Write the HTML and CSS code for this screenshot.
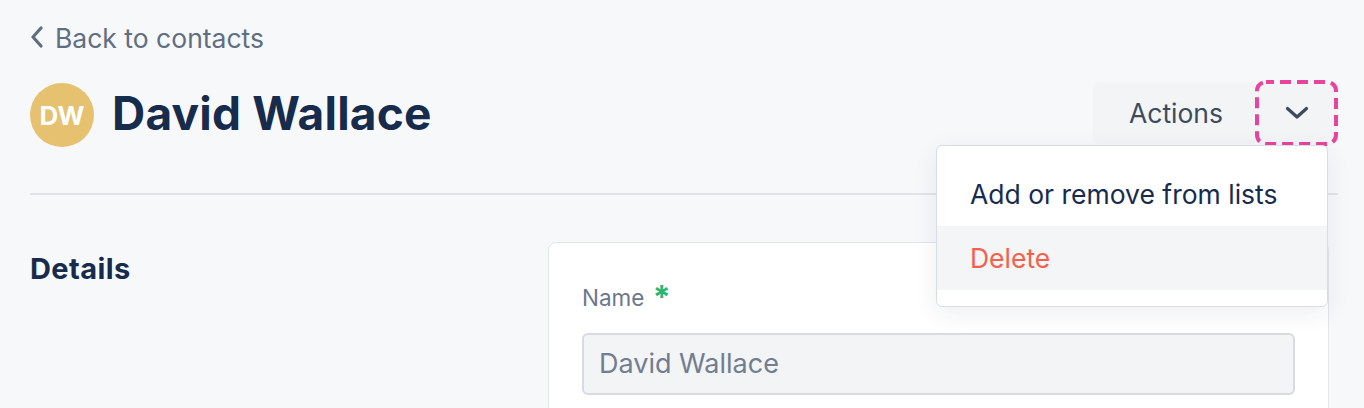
FILE: index.html
```html
<!DOCTYPE html>
<html lang="en">
<head>
<meta charset="utf-8">
<title>David Wallace</title>
<link rel="stylesheet" href="styles.css">
</head>
<body>
<div class="page">
  <a class="back" href="#">
    <svg class="back-icon" width="14" height="22" viewBox="0 0 14 22"><path d="M11 2 L3 11 L11 20" fill="none" stroke="#5f6e81" stroke-width="3.2" stroke-linecap="round" stroke-linejoin="round"/></svg>
    <span>Back to contacts</span>
  </a>
  <div class="header">
    <div class="identity">
      <div class="avatar">DW</div>
      <h1 class="title">David Wallace</h1>
    </div>
    <div class="actions">
      <button class="actions-btn">Actions</button>
      <button class="toggle">
        <svg class="focus-ring" width="83" height="66" viewBox="0 0 83 66"><rect x="2" y="2" width="79" height="62" rx="9" ry="9" fill="none" stroke="#e8449b" stroke-width="4" stroke-dasharray="11 6" stroke-dashoffset="3"/></svg>
        <svg width="24" height="14" viewBox="0 0 24 14"><path d="M2.5 2.5 L12 11 L21.5 2.5" fill="none" stroke="#3d4a5e" stroke-width="3.2" stroke-linecap="round" stroke-linejoin="round"/></svg>
      </button>
      <div class="menu">
        <div class="menu-item">Add or remove from lists</div>
        <div class="menu-item danger">Delete</div>
      </div>
    </div>
  </div>
  <div class="rule"></div>
  <div class="details">
    <h2 class="section-title">Details</h2>
    <div class="card">
      <label class="label">Name <span class="req">*</span></label>
      <div class="input">David Wallace</div>
    </div>
  </div>
</div>
</body>
</html>
```

FILE: styles.css
```css
* { box-sizing: border-box; }
html, body { margin: 0; padding: 0; }
body {
  background: #f7f8fa;
  font-family: Inter, Lato, "Noto Sans", sans-serif;
  overflow: hidden;
  height: 408px;
}
.page {
  padding: 22px 26px 0 30px;
}
.back {
  display: flex;
  align-items: center;
  gap: 11px;
  height: 32px;
  font-size: 26.5px;
  line-height: 32px;
  color: #5f6e81;
  text-decoration: none;
}
.back-icon { margin-top: -2px; }
.header {
  margin-top: 26px;
  height: 66px;
  display: flex;
  align-items: center;
  justify-content: space-between;
}
.identity {
  display: flex;
  align-items: center;
  gap: 18px;
}
.avatar {
  width: 64px;
  height: 64px;
  border-radius: 50%;
  background: #e6c170;
  color: #ffffff;
  font-weight: 700;
  font-size: 26px;
  display: flex;
  align-items: center;
  justify-content: center;
  margin-top: 4px;
}
.title {
  margin: 0;
  font-size: 46px;
  font-weight: 700;
  color: #172b4d;
  letter-spacing: 0.2px;
}
.actions {
  position: relative;
  display: flex;
  align-items: center;
  height: 66px;
}
.actions-btn {
  height: 62px;
  border: none;
  background: #f3f4f6;
  font-family: inherit;
  font-size: 26.5px;
  color: #3d4a5e;
  padding: 0 32px 0 36px;
  border-radius: 6px 0 0 6px;
  cursor: pointer;
}
.toggle {
  position: relative;
  width: 83px;
  height: 66px;
  border: none;
  border-radius: 10px;
  background: #f3f4f6;
  display: flex;
  align-items: center;
  justify-content: center;
  padding: 0;
  cursor: pointer;
}
.focus-ring {
  position: absolute;
  top: 0;
  left: 0;
}
.menu {
  position: absolute;
  top: 65px;
  right: 10px;
  width: 392px;
  background: #ffffff;
  border: 1px solid #d9dce1;
  border-radius: 6px;
  padding: 16px 0 16px;
  box-shadow: 0 6px 24px rgba(23, 43, 77, 0.08);
  z-index: 5;
}
.menu-item {
  height: 64px;
  line-height: 64px;
  padding-left: 33px;
  font-size: 26.5px;
  color: #172b4d;
}
.menu-item.danger {
  background: #f4f5f7;
  color: #f5604b;
}
.rule {
  margin-top: 47px;
  height: 2px;
  background: #e1e3e8;
}
.details {
  display: flex;
  margin-top: 47px;
}
.section-title {
  width: 518px;
  margin: 0;
  padding-top: 9px;
  font-size: 29px;
  font-weight: 700;
  color: #172b4d;
  letter-spacing: 0.4px;
}
.card {
  width: 781px;
  height: 200px;
  background: #ffffff;
  border: 1px solid #e3e5e9;
  border-radius: 8px;
  padding: 40px 33px 0 33px;
}
.label {
  display: block;
  font-size: 22.5px;
  color: #6b778c;
  height: 30px;
  line-height: 30px;
}
.req {
  color: #2ab673;
  font-weight: 700;
  font-size: 32px;
  line-height: 30px;
  vertical-align: top;
  margin-left: 2px;
}
.input {
  margin-top: 20px;
  height: 62px;
  border: 2px solid #d8dadf;
  border-radius: 6px;
  background: #f3f4f6;
  padding-left: 15px;
  line-height: 58px;
  font-size: 27px;
  color: #717d91;
}
```
